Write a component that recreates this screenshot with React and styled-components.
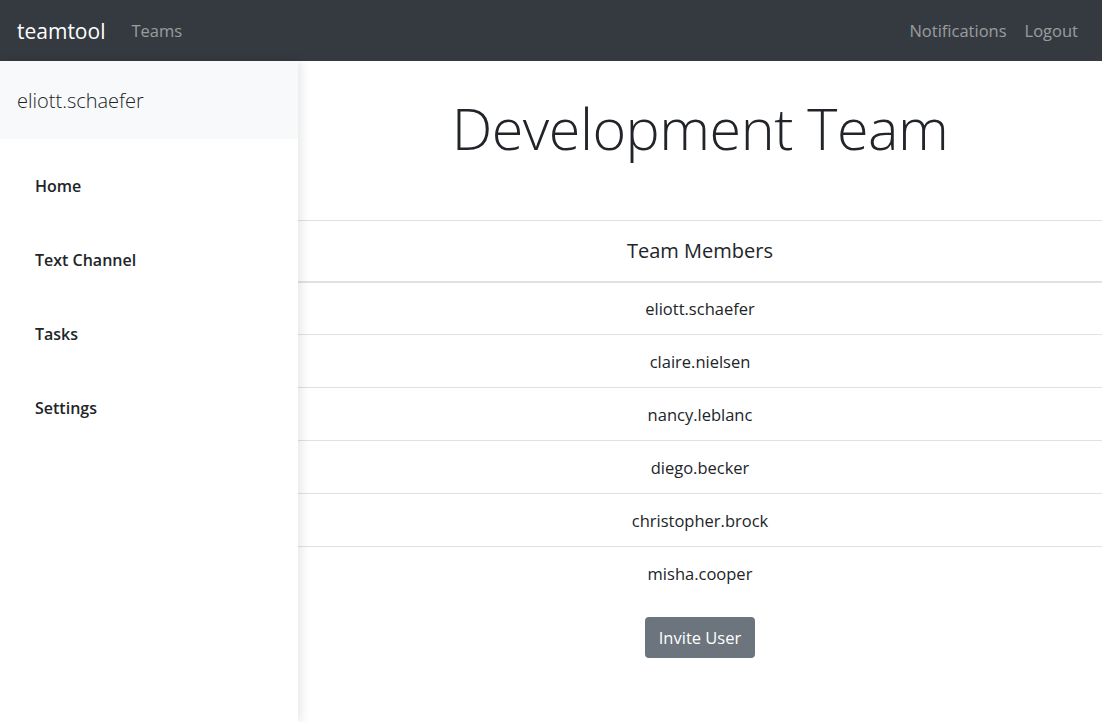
import React from "react";
import styled, {createGlobalStyle} from "styled-components";

const GlobalStyle = createGlobalStyle`
  html, body {
    margin: 0;
    padding: 0;
    background: #fff;
  }
  body {
    font-family: "Open Sans", "Noto Sans", sans-serif;
    font-size: 17.6px;
    color: #212529;
  }
  * {
    box-sizing: border-box;
  }
`

const Page = styled.div`
  display: flex;
  flex-direction: column;
  min-height: 722px;
`

const Navbar = styled.nav`
  height: 61px;
  background: #343a40;
  display: flex;
  align-items: center;
  padding: 0 15px 0 17px;
  .brand {
    color: #fff;
    font-size: 21px;
    margin-right: 17px;
  }
  .spacer {
    flex: 1;
  }
`

const NavLink = styled.a`
  color: rgba(255, 255, 255, .5);
  font-size: 16.5px;
  text-decoration: none;
  padding: 0 9px;
`

const Body = styled.div`
  display: flex;
  flex: 1;
`

const Sidebar = styled.aside`
  width: 298px;
  flex-shrink: 0;
  box-shadow: 3px 0 10px rgba(0, 0, 0, .1);
  position: relative;
  z-index: 1;
  background: #fff;
`

const SidebarHeader = styled.div`
  height: 78px;
  background: #f8f9fa;
  display: flex;
  align-items: center;
  padding-left: 17px;
  font-size: 20px;
  font-weight: 300;
`

const SideNav = styled.ul`
  list-style: none;
  margin: 0;
  padding: 10px 0 0;
`

const SideItem = styled.li`
  height: 74px;
  display: flex;
  align-items: center;
  padding-left: 35px;
  font-weight: 600;
  font-size: 16px;
`

const Main = styled.main`
  flex: 1;
  text-align: center;
`

const Title = styled.h1`
  margin: 0;
  height: 159px;
  display: flex;
  align-items: center;
  justify-content: center;
  font-size: 57.5px;
  font-weight: 300;
  letter-spacing: -0.5px;
  padding-bottom: 26px;
`

const Table = styled.table`
  width: 100%;
  border-collapse: collapse;
  th {
    font-weight: 400;
    font-size: 20px;
    height: 61px;
    border-top: 1px solid #dee2e6;
    border-bottom: 2px solid #dee2e6;
  }
  td {
    height: 53px;
    font-size: 16.5px;
    border-top: 1px solid #dee2e6;
  }
  tr:first-child td {
    border-top: none;
  }
`

const Button = styled.button`
  margin-top: 17px;
  background: #6c757d;
  color: #fff;
  border: none;
  border-radius: 4px;
  height: 41px;
  padding: 0 14px;
  font-family: inherit;
  font-size: 16.5px;
`

const members = [
    "eliott.schaefer",
    "claire.nielsen",
    "nancy.leblanc",
    "diego.becker",
    "christopher.brock",
    "misha.cooper",
]

const App = () => {
    return (
        <Page>
            <GlobalStyle/>
            <Navbar>
                <span className="brand">teamtool</span>
                <NavLink href="#">Teams</NavLink>
                <div className="spacer"/>
                <NavLink href="#">Notifications</NavLink>
                <NavLink href="#">Logout</NavLink>
            </Navbar>
            <Body>
                <Sidebar>
                    <SidebarHeader>eliott.schaefer</SidebarHeader>
                    <SideNav>
                        <SideItem>Home</SideItem>
                        <SideItem>Text Channel</SideItem>
                        <SideItem>Tasks</SideItem>
                        <SideItem>Settings</SideItem>
                    </SideNav>
                </Sidebar>
                <Main>
                    <Title>Development Team</Title>
                    <Table>
                        <thead>
                        <tr>
                            <th>Team Members</th>
                        </tr>
                        </thead>
                        <tbody>
                        {members.map(m => (
                            <tr key={m}>
                                <td>{m}</td>
                            </tr>
                        ))}
                        </tbody>
                    </Table>
                    <Button>Invite User</Button>
                </Main>
            </Body>
        </Page>
    )
}

export default App;
